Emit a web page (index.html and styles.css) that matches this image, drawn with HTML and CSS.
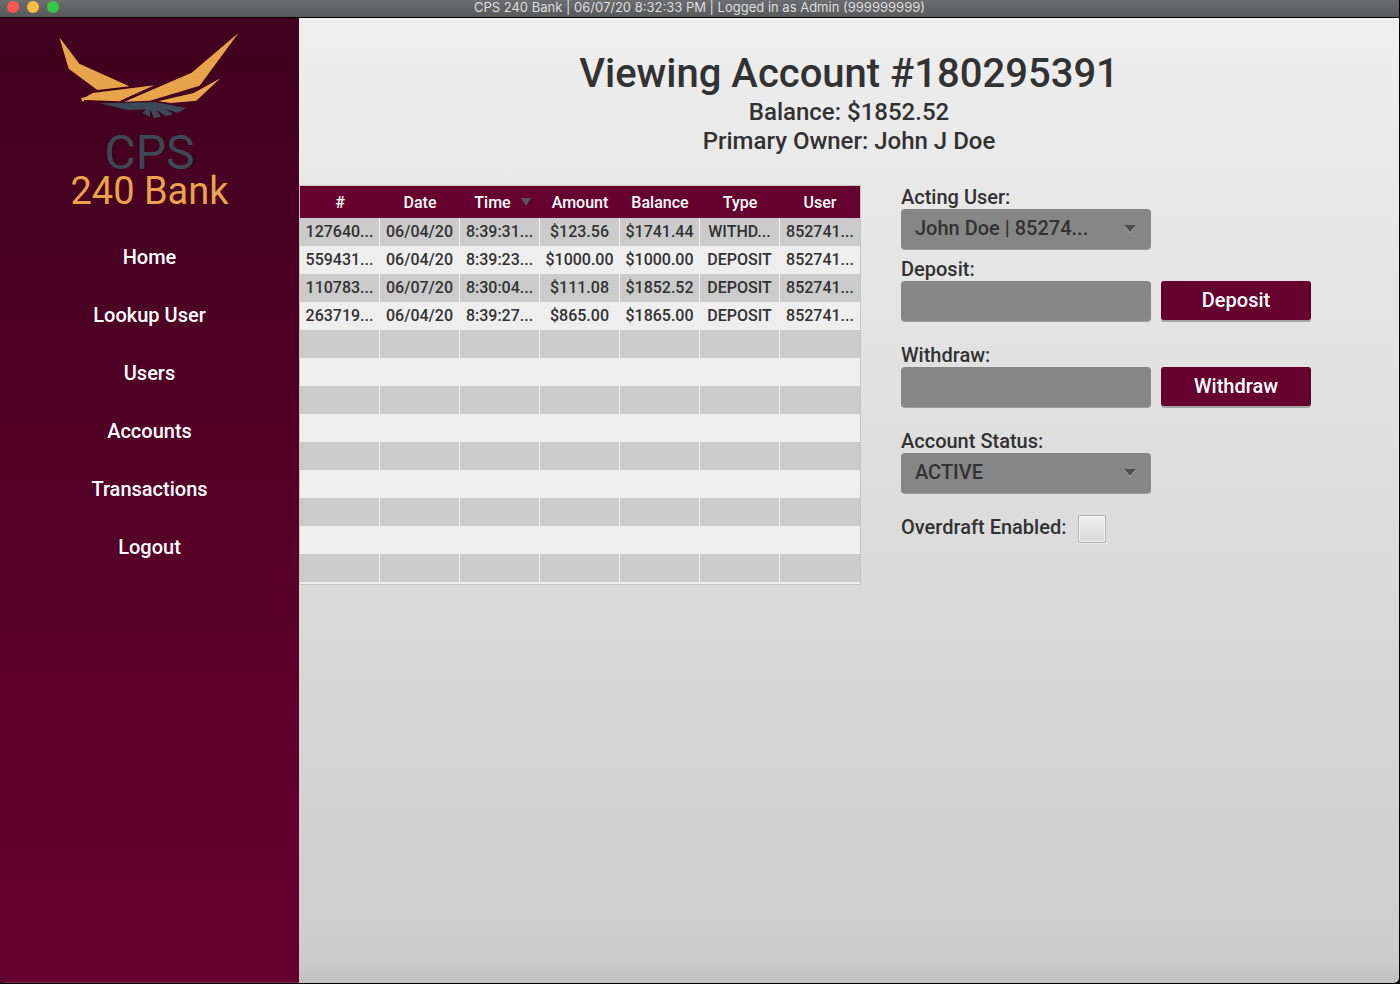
FILE: index.html
```html
<!DOCTYPE html>
<html lang="en">
<head>
<meta charset="utf-8">
<title>CPS 240 Bank</title>
<link rel="stylesheet" href="styles.css">
</head>
<body>
<div class="window">
  <header class="titlebar">
    <div class="lights">
      <button class="light light-close" type="button" aria-label="Close"></button>
      <button class="light light-min" type="button" aria-label="Minimize"></button>
      <button class="light light-max" type="button" aria-label="Zoom"></button>
    </div>
    <div class="titlebar-text">CPS 240 Bank | 06/07/20 8:32:33 PM | Logged in as Admin (999999999)</div>
  </header>
  <div class="body">
    <aside class="sidebar">
      <div class="logo">
        <svg class="eagle" viewBox="0 -6 657 318" aria-hidden="true">
          <g fill="#e8a44a">
            <path d="M58 52L118 131L268 199L172 210L86 146Z"/>
            <path d="M343 196L238 244L134 240L128 246L123 234L137 231L158 219Z"/>
            <path d="M596 38L479 197L330 242L253 245L455 158Z"/>
            <path d="M541 175L469 242L394 249L354 244L461 219Z"/>
          </g>
          <path fill="#3b4954" d="M178 250L343 246L439 264L414 278L374 267L401 282L378 289L350 270L363 291L341 294L331 268L329 291L308 278L318 268L263 270Z"/>
        </svg>
        <div class="logo-top">CPS</div>
        <div class="logo-bottom">240 Bank</div>
      </div>
      <nav class="nav">
        <a class="nav-link" href="#home">Home</a>
        <a class="nav-link" href="#lookup">Lookup User</a>
        <a class="nav-link" href="#users">Users</a>
        <a class="nav-link" href="#accounts">Accounts</a>
        <a class="nav-link" href="#transactions">Transactions</a>
        <a class="nav-link" href="#logout">Logout</a>
      </nav>
    </aside>
    <main class="main">
      <div class="heading">
        <h1 class="title">Viewing Account #180295391</h1>
        <p class="subtitle">Balance: $1852.52</p>
        <p class="subtitle">Primary Owner: John J Doe</p>
      </div>
      <div class="content">
        <div class="table-box">
          <table class="table">
            <thead>
              <tr>
                <th>#</th>
                <th>Date</th>
                <th><span class="sorted"><span class="sorted-label">Time</span><svg class="sort-arrow" viewBox="0 0 10 8" aria-hidden="true"><path d="M0 0H10L5 8Z"/></svg></span></th>
                <th>Amount</th>
                <th>Balance</th>
                <th>Type</th>
                <th>User</th>
              </tr>
            </thead>
            <tbody>
              <tr><td>127640...</td><td>06/04/20</td><td>8:39:31...</td><td>$123.56</td><td>$1741.44</td><td>WITHD...</td><td>852741...</td></tr>
              <tr><td>559431...</td><td>06/04/20</td><td>8:39:23...</td><td>$1000.00</td><td>$1000.00</td><td>DEPOSIT</td><td>852741...</td></tr>
              <tr><td>110783...</td><td>06/07/20</td><td>8:30:04...</td><td>$111.08</td><td>$1852.52</td><td>DEPOSIT</td><td>852741...</td></tr>
              <tr><td>263719...</td><td>06/04/20</td><td>8:39:27...</td><td>$865.00</td><td>$1865.00</td><td>DEPOSIT</td><td>852741...</td></tr>
              <tr><td></td><td></td><td></td><td></td><td></td><td></td><td></td></tr>
              <tr><td></td><td></td><td></td><td></td><td></td><td></td><td></td></tr>
              <tr><td></td><td></td><td></td><td></td><td></td><td></td><td></td></tr>
              <tr><td></td><td></td><td></td><td></td><td></td><td></td><td></td></tr>
              <tr><td></td><td></td><td></td><td></td><td></td><td></td><td></td></tr>
              <tr><td></td><td></td><td></td><td></td><td></td><td></td><td></td></tr>
              <tr><td></td><td></td><td></td><td></td><td></td><td></td><td></td></tr>
              <tr><td></td><td></td><td></td><td></td><td></td><td></td><td></td></tr>
              <tr><td></td><td></td><td></td><td></td><td></td><td></td><td></td></tr>
            </tbody>
          </table>
        </div>
        <form class="form">
          <div class="field field-tight">
            <label class="label" for="acting">Acting User:</label>
            <div class="select-box">
              <select class="control select" id="acting"><option>John Doe | 85274...</option></select>
              <svg class="chevron" viewBox="0 0 12 8" aria-hidden="true"><path class="chevron-shine" d="M0 1H12L6 8Z"/><path class="chevron-fill" d="M0 0H12L6 7Z"/></svg>
            </div>
          </div>
          <div class="field">
            <label class="label" for="deposit">Deposit:</label>
            <div class="row">
              <input class="control" id="deposit" type="text">
              <button class="action" type="button">Deposit</button>
            </div>
          </div>
          <div class="field">
            <label class="label" for="withdraw">Withdraw:</label>
            <div class="row">
              <input class="control" id="withdraw" type="text">
              <button class="action" type="button">Withdraw</button>
            </div>
          </div>
          <div class="field">
            <label class="label" for="status">Account Status:</label>
            <div class="select-box">
              <select class="control select" id="status"><option>ACTIVE</option></select>
              <svg class="chevron" viewBox="0 0 12 8" aria-hidden="true"><path class="chevron-shine" d="M0 1H12L6 8Z"/><path class="chevron-fill" d="M0 0H12L6 7Z"/></svg>
            </div>
          </div>
          <div class="row check-row">
            <label class="label" for="overdraft">Overdraft Enabled:</label>
            <input class="check" id="overdraft" type="checkbox">
          </div>
        </form>
      </div>
    </main>
  </div>
</div>
</body>
</html>
```

FILE: styles.css
```css
* {
  box-sizing: border-box;
}

body {
  margin: 0;
  background: #000;
  color: #323232;
  font-family: Roboto, "Liberation Sans", sans-serif;
  font-weight: 500;
}

.window {
  display: flex;
  flex-direction: column;
  min-height: 100vh;
  padding: 0 1px 1px 0;
}

.titlebar {
  position: relative;
  height: 18px;
  border-bottom: 1px solid #000;
  background: linear-gradient(#6c6d6f, #58595b);
}

.lights {
  position: absolute;
  top: 1px;
  left: 7px;
  display: flex;
  gap: 8px;
}

.light {
  width: 12px;
  height: 12px;
  padding: 0;
  border: 0;
  border-radius: 50%;
}

.light-close {
  background: #fc5753;
}

.light-min {
  background: #fdbc40;
}

.light-max {
  background: #34c84a;
}

.titlebar-text {
  color: #dededf;
  font: 400 13px/15px Inter, "Liberation Sans", sans-serif;
  text-align: center;
}

.body {
  display: flex;
  flex: 1;
}

.sidebar {
  flex: none;
  width: 299px;
  background: linear-gradient(#40001e, #66002f 94%);
  border-bottom: 1px solid #7f2650;
  border-bottom-left-radius: 4px;
  text-align: center;
}

.logo {
  padding-bottom: 20px;
}

.eagle {
  display: block;
  width: 219px;
  height: 106px;
  margin: 0 auto 8px;
}

.logo-top {
  color: #3b4954;
  font-weight: 400;
  font-size: 48px;
  line-height: 42px;
}

.logo-bottom {
  color: #e8a44a;
  font-weight: 400;
  font-size: 38px;
  line-height: 34px;
}

.nav {
  display: flex;
  flex-direction: column;
}

.nav-link {
  padding: 17px 0;
  color: #fff;
  font-size: 20px;
  line-height: 24px;
  text-decoration: none;
}

.main {
  flex: 1;
  min-width: 0;
  background:
    linear-gradient(transparent, rgba(0, 0, 0, 0.06)) bottom / 100% 24px no-repeat,
    linear-gradient(#eee, #ccc);
  border-bottom-right-radius: 5px;
}

.heading {
  padding: 32px 0 29px;
  text-align: center;
}

.title {
  margin: 0;
  font-weight: 500;
  font-size: 40px;
  line-height: 48px;
}

.subtitle {
  margin: 0;
  font-size: 24px;
  line-height: 29px;
}

.content {
  display: flex;
  align-items: flex-start;
  gap: 40px;
}

.table-box {
  flex: 0 1 562px;
  padding-bottom: 2px;
  border: 1px solid #c4c4c4;
  background: #eee;
}

.table {
  width: 100%;
  table-layout: fixed;
  border-collapse: separate;
  border-spacing: 0;
  font-size: 16px;
  text-align: center;
}

.table th {
  height: 32px;
  padding: 0;
  background: #66002f;
  color: #fff;
  font-weight: 500;
}

.table td {
  height: 28px;
  padding: 0 0 2px;
  border-right: 1px solid #eee;
  white-space: nowrap;
}

.table td:last-child {
  border-right: 0;
}

.table tbody tr:nth-child(odd) {
  background: #cbcbcb;
}

.sorted {
  display: flex;
  align-items: center;
}

.sorted-label {
  flex: 1;
  padding-left: 4px;
}

.sort-arrow {
  width: 10px;
  height: 8px;
  margin-right: 9px;
  fill: #5c5558;
}

.form {
  display: flex;
  flex-direction: column;
  gap: 22px;
  font-size: 20px;
}

.field {
  display: flex;
  flex-direction: column;
}

.field-tight {
  margin-bottom: -14px;
}

.label {
  line-height: 24px;
}

.row {
  display: flex;
  gap: 10px;
}

.check-row {
  gap: 12px;
}

.select-box {
  position: relative;
  width: 250px;
}

.control {
  width: 250px;
  height: 40px;
  padding: 0 14px 1px;
  border: 0;
  border-radius: 4px;
  background: #868686;
  box-shadow: 0 1px 0 #9d9d9d;
  color: #323232;
  font: inherit;
}

.select {
  display: block;
  appearance: none;
  padding-bottom: 2px;
}

.chevron {
  position: absolute;
  top: 16px;
  right: 15px;
  width: 12px;
  height: 8px;
  pointer-events: none;
}

.chevron-shine {
  fill: #b4b4b4;
}

.chevron-fill {
  fill: #4e4e4e;
}

.action {
  width: 150px;
  height: 39px;
  padding: 0 0 2px;
  border: 0;
  border-radius: 3px;
  background: #66002f;
  box-shadow: 0 2px 0 #a3a3a3;
  color: #fff;
  font: inherit;
}

.check {
  width: 28px;
  height: 28px;
  margin: 0;
  appearance: none;
  border: 1px solid #b3b3b3;
  border-radius: 2px;
  background: linear-gradient(#ededed, #dadada);
  box-shadow: inset 0 0 0 1px #f1f1f1, 0 1px 0 #e9e9e9;
}
```
